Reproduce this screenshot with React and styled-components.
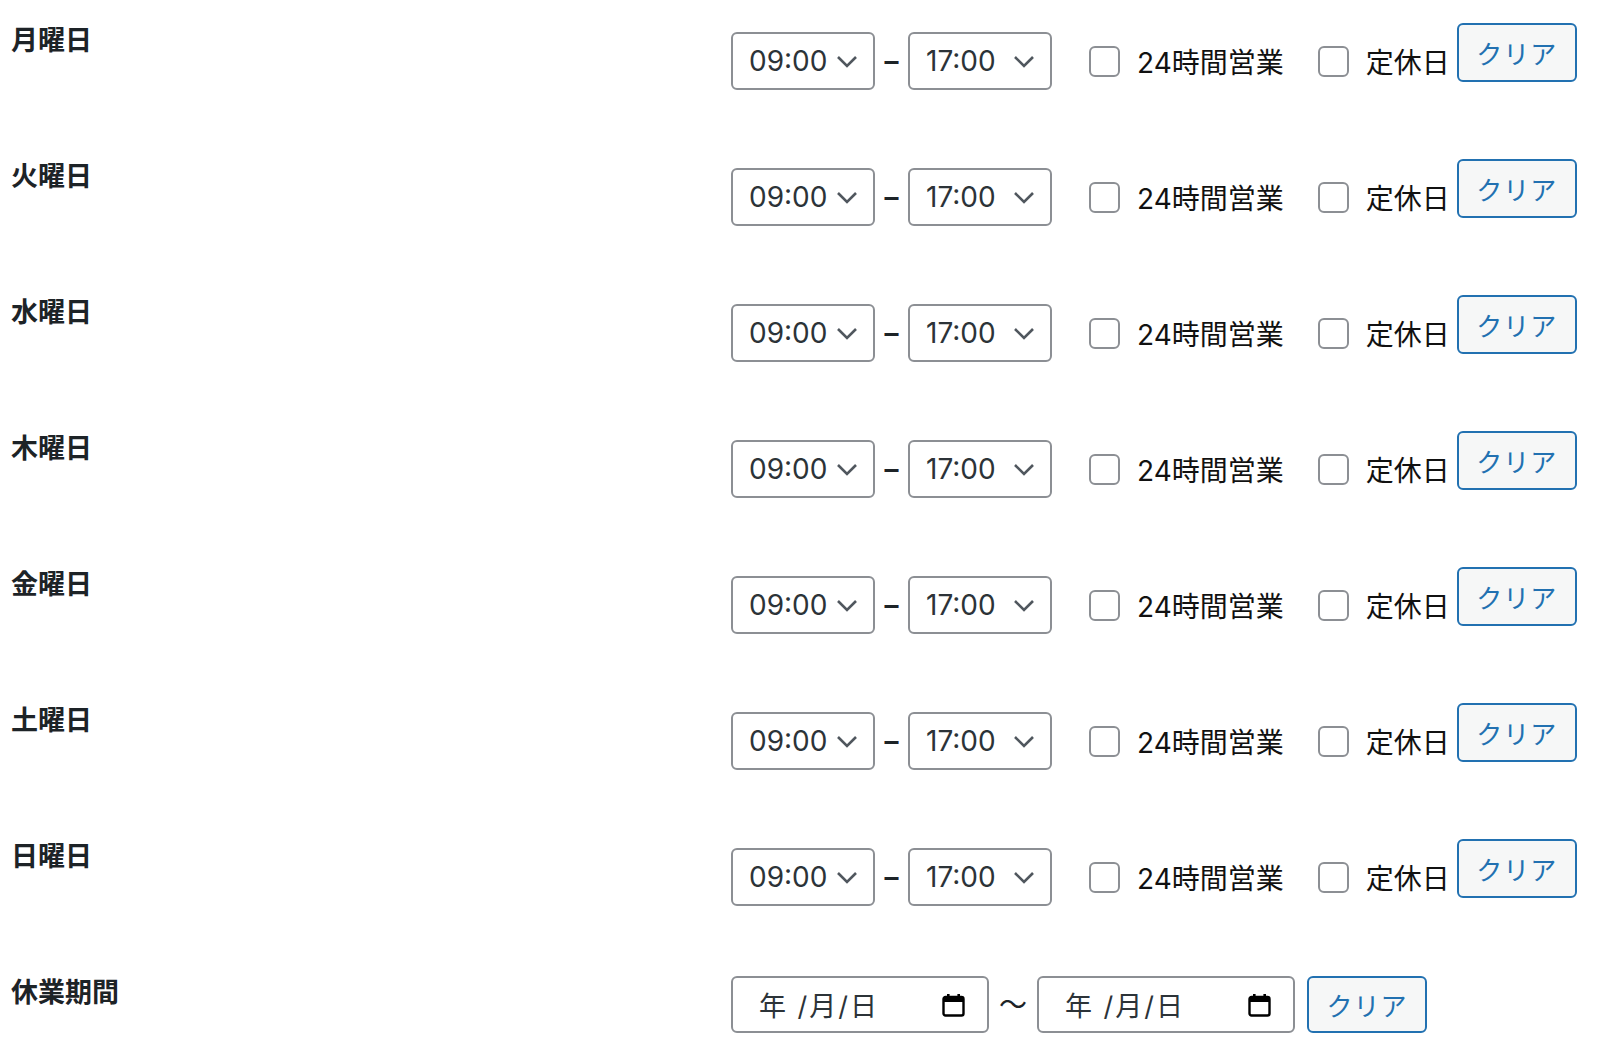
import styled, { createGlobalStyle } from 'styled-components';

const FONT = 'Inter, "Noto Sans CJK JP", sans-serif';

const GlobalStyle = createGlobalStyle`
    * { box-sizing: border-box; }
    body {
        margin: 0;
        background: #fff;
        font-family: ${FONT};
        color: #1d2327;
    }
`;

const Table = styled.div`
    display: flex;
    flex-direction: column;
    width: 1600px;
`;
const Row = styled.div`
    display: grid;
    grid-template-columns: 731px 1fr;
    height: 136px;
`;
const Label = styled.div`
    padding: 21px 0 0 11px;
    font-family: "Noto Sans CJK JP", sans-serif;
    font-size: 27px;
    font-weight: 700;
    line-height: 1.3;
    color: #1d2327;
`;
const Controls = styled.div`
    display: flex;
    align-items: center;
    align-self: start;
    padding-top: ${props => props.top}px;
`;
const SelectWrap = styled.div`
    position: relative;
    width: 144px;
    height: 58px;
`;
const Select = styled.select`
    appearance: none;
    width: 100%;
    height: 100%;
    border: 2px solid #8c8f94;
    border-radius: 6px;
    background: #fff;
    padding: 0 0 0 16px;
    font-family: ${FONT};
    font-size: 28px;
    color: #2c3338;
    outline: none;
`;
const Chevron = styled.svg`
    position: absolute;
    right: 17px;
    top: 23px;
    pointer-events: none;
`;
const Sep = styled.span`
    width: ${props => props.w}px;
    text-align: center;
    font-size: 28px;
    font-weight: ${props => props.weight};
    color: #1d2327;
    line-height: 1;
`;
const Check = styled.label`
    display: flex;
    align-items: center;
    margin-left: ${props => props.gap}px;
    font-size: 28px;
    color: #111;
    white-space: nowrap;
`;
const Box = styled.input`
    appearance: none;
    width: 31px;
    height: 31px;
    margin: 0 17px 0 0;
    border: 2px solid #8c8f94;
    border-radius: 6px;
    background: #fff;
`;
const Button = styled.button`
    width: 120px;
    height: ${props => props.h}px;
    margin-left: ${props => props.gap}px;
    margin-top: ${props => props.shift}px;
    border: 2px solid #2271b1;
    border-radius: 6px;
    background: #f6f7f7;
    color: #2271b1;
    font-family: ${FONT};
    font-size: 26px;
    letter-spacing: 1px;
    padding: 0;
`;
const DateField = styled.div`
    display: flex;
    align-items: center;
    justify-content: space-between;
    width: 258px;
    height: 57px;
    padding: 0 22px 0 26px;
    border: 2px solid #8c8f94;
    border-radius: 6px;
    background: #fff;
    font-size: 27px;
    letter-spacing: 2px;
    color: #2c3338;
`;

const days = ['月曜日', '火曜日', '水曜日', '木曜日', '金曜日', '土曜日', '日曜日'];

const TimeSelect = ({ value }) => (
    <SelectWrap>
        <Select defaultValue={value}>
            <option>{value}</option>
        </Select>
        <Chevron width="22" height="13" viewBox="0 0 22 13">
            <path d="M2 2l9 9 9-9" fill="none" stroke="#50575e" strokeWidth="2.6" />
        </Chevron>
    </SelectWrap>
);

const CalendarIcon = () => (
    <svg width="23" height="24" viewBox="0 0 23 24">
        <rect x="1.5" y="4" width="20" height="18.5" rx="2" fill="none" stroke="#000" strokeWidth="2.4" />
        <rect x="1.5" y="4" width="20" height="5" fill="#000" />
        <rect x="5" y="1" width="2.6" height="5" fill="#000" />
        <rect x="15.4" y="1" width="2.6" height="5" fill="#000" />
    </svg>
);

const DateInput = () => (
    <DateField>
        <span>年 /月/日</span>
        <CalendarIcon />
    </DateField>
);

const App = () => (
    <>
        <GlobalStyle />
        <Table>
            {days.map(day => (
                <Row key={day}>
                    <Label>{day}</Label>
                    <Controls top={32}>
                        <TimeSelect value="09:00" />
                        <Sep w={33} weight={600}>–</Sep>
                        <TimeSelect value="17:00" />
                        <Check gap={37}>
                            <Box type="checkbox" />
                            24時間営業
                        </Check>
                        <Check gap={34}>
                            <Box type="checkbox" />
                            定休日
                        </Check>
                        <Button h={59} gap={7} shift={-18}>クリア</Button>
                    </Controls>
                </Row>
            ))}
            <Row>
                <Label>休業期間</Label>
                <Controls top={24}>
                    <DateInput />
                    <Sep w={48} weight={400}>〜</Sep>
                    <DateInput />
                    <Button h={57} gap={12} shift={0}>クリア</Button>
                </Controls>
            </Row>
        </Table>
    </>
);

export default App;
